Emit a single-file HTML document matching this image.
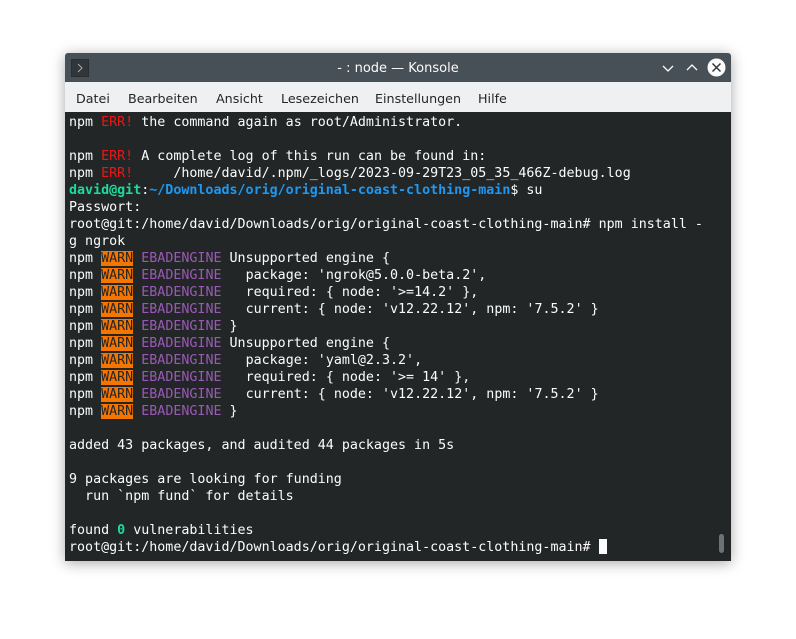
<!DOCTYPE html>
<html><head><meta charset="utf-8"><style>
html,body{margin:0;padding:0;background:#fff;width:796px;height:639px;overflow:hidden}
.win{position:absolute;left:65px;top:53px;width:666px;height:508px;box-shadow:0 2px 14px rgba(0,0,0,0.35);border-radius:3px 3px 0 0;overflow:hidden}
.title{height:29px;background:#475057;position:relative;color:#fcfcfc;font:13px "DejaVu Sans","Liberation Sans",sans-serif}
.title .t{position:absolute;left:0;right:0;top:8px;text-align:center}
.icon{position:absolute;left:6px;top:6px;width:16px;height:16px;background:#31363b;border:1px solid #2a2e32}
.menu{height:30px;background:#eff0f1;font:12.7px "DejaVu Sans","Liberation Sans",sans-serif;color:#232627;position:relative}
.menu span{position:absolute;top:9px}
.term{position:absolute;top:59px;left:0;right:0;bottom:0;background:#232627;color:#fcfcfc;font:13.33px "DejaVu Sans Mono","Liberation Mono",monospace;padding:2px 0 0 4px;box-sizing:border-box}
.l{height:17px;line-height:17px;white-space:pre}
.r{color:#ed1515}.w{background:#f67400;color:#232627}.p{color:#9b59b6}
.g{color:#1cdc9a;font-weight:bold}.b{color:#1d99f3;font-weight:bold}.gn{color:#1cdc9a;font-weight:bold}
.cur{display:inline-block;width:8px;height:15px;background:#fcfcfc;vertical-align:-3px}
.sb{position:absolute;right:7px;bottom:8px;width:5px;height:19px;border-radius:3px;background:#6e7175}
</style></head><body>
<div class="win">
<div class="title"><div class="icon"><svg width="16" height="16"><path d="M6 4l4 4-4 4" stroke="#aaa" fill="none"/></svg></div>
<div class="t">- : node — Konsole</div>
<svg style="position:absolute;left:596px;top:8px" width="14" height="14"><path d="M2 5l5 5 5-5" stroke="#fcfcfc" fill="none" stroke-width="1.3"/></svg>
<svg style="position:absolute;left:620px;top:8px" width="14" height="14"><path d="M2 9l5-5 5 5" stroke="#fcfcfc" fill="none" stroke-width="1.3"/></svg>
<svg style="position:absolute;left:642px;top:5px" width="19" height="19"><circle cx="9.5" cy="9.5" r="9" fill="#fcfcfc"/><path d="M5.5 5.5l8 8M13.5 5.5l-8 8" stroke="#31363b" stroke-width="1.5"/></svg>
</div>
<div class="menu"><span style="left:11px">Datei</span><span style="left:63px">Bearbeiten</span><span style="left:151px">Ansicht</span><span style="left:216px">Lesezeichen</span><span style="left:310px">Einstellungen</span><span style="left:413px">Hilfe</span></div>
<div class="term">
<div class="l">npm <span class="r">ERR!</span> the command again as root/Administrator.</div>
<div class="l"> </div>
<div class="l">npm <span class="r">ERR!</span> A complete log of this run can be found in:</div>
<div class="l">npm <span class="r">ERR!</span>     /home/david/.npm/_logs/2023-09-29T23_05_35_466Z-debug.log</div>
<div class="l"><span class="g">david@git</span>:<span class="b">~/Downloads/orig/original-coast-clothing-main</span>$ su</div>
<div class="l">Passwort:</div>
<div class="l">root@git:/home/david/Downloads/orig/original-coast-clothing-main# npm install -</div>
<div class="l">g ngrok</div>
<div class="l">npm <span class="w">WARN</span> <span class="p">EBADENGINE</span> Unsupported engine {</div>
<div class="l">npm <span class="w">WARN</span> <span class="p">EBADENGINE</span>   package: 'ngrok@5.0.0-beta.2',</div>
<div class="l">npm <span class="w">WARN</span> <span class="p">EBADENGINE</span>   required: { node: '&gt;=14.2' },</div>
<div class="l">npm <span class="w">WARN</span> <span class="p">EBADENGINE</span>   current: { node: 'v12.22.12', npm: '7.5.2' }</div>
<div class="l">npm <span class="w">WARN</span> <span class="p">EBADENGINE</span> }</div>
<div class="l">npm <span class="w">WARN</span> <span class="p">EBADENGINE</span> Unsupported engine {</div>
<div class="l">npm <span class="w">WARN</span> <span class="p">EBADENGINE</span>   package: 'yaml@2.3.2',</div>
<div class="l">npm <span class="w">WARN</span> <span class="p">EBADENGINE</span>   required: { node: '&gt;= 14' },</div>
<div class="l">npm <span class="w">WARN</span> <span class="p">EBADENGINE</span>   current: { node: 'v12.22.12', npm: '7.5.2' }</div>
<div class="l">npm <span class="w">WARN</span> <span class="p">EBADENGINE</span> }</div>
<div class="l"> </div>
<div class="l">added 43 packages, and audited 44 packages in 5s</div>
<div class="l"> </div>
<div class="l">9 packages are looking for funding</div>
<div class="l">  run `npm fund` for details</div>
<div class="l"> </div>
<div class="l">found <span class="gn">0</span> vulnerabilities</div>
<div class="l">root@git:/home/david/Downloads/orig/original-coast-clothing-main# <span class="cur"></span></div>
<div class="sb"></div>
</div>
</div>
</body></html>
